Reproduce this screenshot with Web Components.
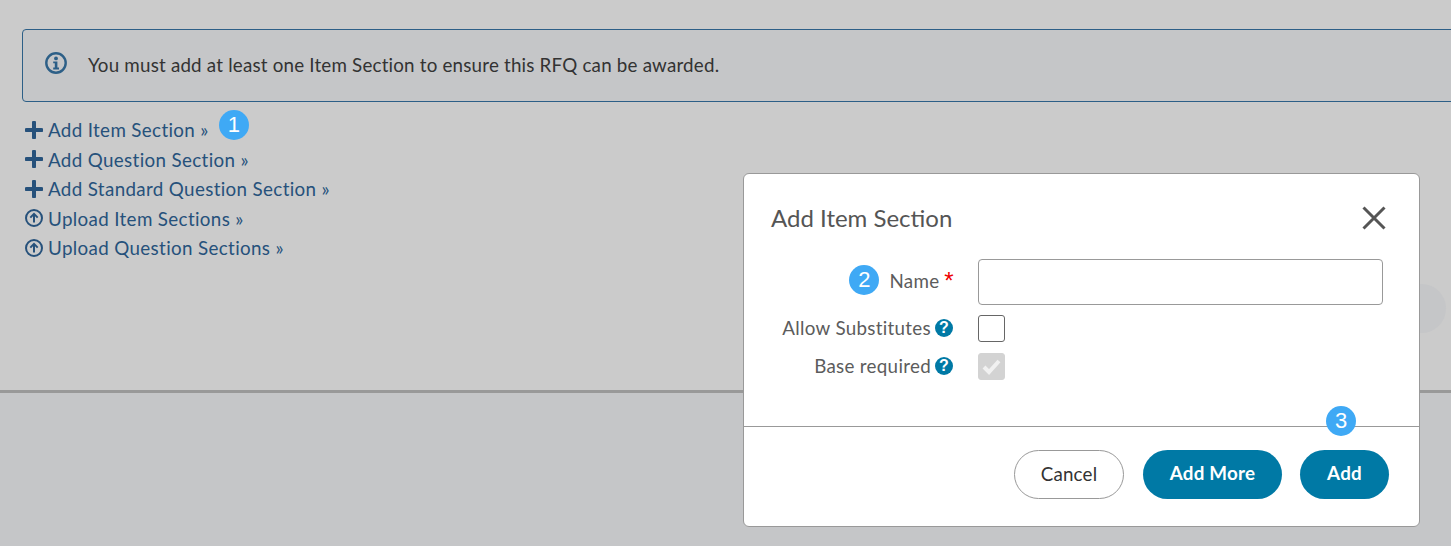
<!DOCTYPE html>
<html>
<head>
<meta charset="utf-8">
<title>Add Item Section</title>
<style>
  html, body { margin: 0; padding: 0; }
  body { width: 1451px; height: 546px; overflow: hidden; position: relative; background: #c5c6c8; font-family: "Lato", "Liberation Sans", sans-serif; }
</style>
</head>
<body>
<rfq-page></rfq-page>
<script>
const PLUS = `<svg width="18" height="18" viewBox="0 0 18 18"><path d="M9 1.5v15M1.5 9h15" stroke="#26517b" stroke-width="4" stroke-linecap="round" fill="none"/></svg>`;
const UPLOAD = `<svg width="18" height="18" viewBox="0 0 18 18" fill="none" stroke="#26517b" stroke-width="2"><circle cx="9" cy="9" r="8"/><path d="M9 13.5V5M5.3 8.6 9 4.9l3.7 3.7"/></svg>`;

class NumBadge extends HTMLElement {
  constructor() {
    super();
    this.attachShadow({ mode: "open" });
    this.shadowRoot.innerHTML = `
      <style>
        :host { display: inline-flex; width: 30px; height: 30px; border-radius: 50%; background: #3fa9f5; color: #fff; align-items: center; justify-content: center; font: 22px/1 "Liberation Sans", sans-serif; letter-spacing: 0; }
      </style>
      <slot></slot>`;
  }
}

class InfoAlert extends HTMLElement {
  constructor() {
    super();
    this.attachShadow({ mode: "open" });
    this.shadowRoot.innerHTML = `
      <style>
        :host { display: flex; align-items: center; box-sizing: border-box; height: 73px; width: 1460px; margin-left: 22px; padding: 0 0 2px 22px; gap: 21px; background: #c5c6c8; border: 1px solid #2d5f87; border-radius: 4px; color: #333; font-size: 18.8px; letter-spacing: 0.19px; }
        svg { display: block; margin-top: -4px; }
      </style>
      <svg width="22" height="22" viewBox="0 0 22 22" fill="none"><circle cx="11" cy="11" r="9.7" stroke="#2d5f87" stroke-width="2.4"/><circle cx="11" cy="6.4" r="1.9" fill="#2d5f87"/><path d="M8.2 9.4h4.2v6.2h1.6v1.9H8.2v-1.9h1.6v-4.3H8.2z" fill="#2d5f87"/></svg>
      <span><slot></slot></span>`;
  }
}

class ActionLink extends HTMLElement {
  constructor() {
    super();
    this.attachShadow({ mode: "open" });
    const icon = this.getAttribute("icon") === "upload" ? UPLOAD : PLUS;
    this.shadowRoot.innerHTML = `
      <style>
        :host { display: flex; align-items: center; height: 29.5px; gap: 5px; color: #26517b; font-size: 18.8px; letter-spacing: 0.35px; }
        .i { display: flex; width: 18px; }
        ::slotted(num-badge) { margin: -9px 0 0 5px; }
      </style>
      <span class="i">${icon}</span><span><slot name="text"></slot></span><slot></slot>`;
  }
}

class HelpIcon extends HTMLElement {
  constructor() {
    super();
    this.attachShadow({ mode: "open" });
    this.shadowRoot.innerHTML = `
      <style>
        :host { display: inline-flex; width: 18px; height: 18px; border-radius: 50%; background: #0079a5; color: #fff; align-items: center; justify-content: center; font: bold 16px/1 "Liberation Sans", sans-serif; letter-spacing: 0; }
      </style>?`;
  }
}

class FormRow extends HTMLElement {
  constructor() {
    super();
    this.attachShadow({ mode: "open" });
    const shift = this.getAttribute("label-shift") || "-2";
    this.shadowRoot.innerHTML = `
      <style>
        :host { display: grid; grid-template-columns: 182px 1fr; column-gap: 25px; align-items: center; color: #5c5c5c; font-size: 18.8px; letter-spacing: 0.3px; }
        .label { display: flex; justify-content: flex-end; align-items: center; gap: 4px; margin-top: ${shift}px; }
      </style>
      <div class="label"><slot name="label"></slot></div>
      <div><slot></slot></div>`;
  }
}

class CheckBox extends HTMLElement {
  constructor() {
    super();
    this.attachShadow({ mode: "open" });
    const off = this.hasAttribute("disabled");
    this.shadowRoot.innerHTML = `
      <style>
        :host { display: block; box-sizing: border-box; width: 27px; height: 27px; border-radius: 3px; border: 1px solid ${off ? "#d3d3d3" : "#666"}; background: ${off ? "#d3d3d3" : "#fff"}; }
        svg { display: block; }
      </style>
      ${off ? `<svg width="25" height="25" viewBox="0 0 25 25"><path d="M5 13l5 5 10-11" fill="none" stroke="#f1f1f1" stroke-width="4"/></svg>` : ""}`;
  }
}

class PillButton extends HTMLElement {
  constructor() {
    super();
    this.attachShadow({ mode: "open" });
    const primary = this.hasAttribute("primary");
    this.shadowRoot.innerHTML = `
      <style>
        :host { display: inline-flex; box-sizing: border-box; height: 49px; padding-bottom: ${primary ? 4 : 3}px; border-radius: 25px; align-items: center; justify-content: center; font-size: 18.8px; letter-spacing: 0.2px; ${primary ? "background:#0079a5;color:#fff;font-weight:700;" : "background:#fff;color:#333;border:1px solid #999;"} }
      </style>
      <slot></slot>`;
  }
}

class ModalDialog extends HTMLElement {
  constructor() {
    super();
    this.attachShadow({ mode: "open" });
    this.shadowRoot.innerHTML = `
      <style>
        :host { position: absolute; left: 743px; top: 173px; width: 677px; height: 354px; box-sizing: border-box; background: #fff; border: 1px solid #999; border-radius: 6px; display: flex; flex-direction: column; font-size: 18px; }
        header { display: flex; justify-content: space-between; align-items: center; height: 85px; padding: 1px 33px 0 27px; box-sizing: border-box; color: #555; font-size: 24px; }
        header svg { margin-top: 2px; }
        svg { display: block; }
        .body { flex: 1; display: flex; flex-direction: column; padding: 0 36px 0 27px; }
        footer { position: relative; height: 100px; box-sizing: border-box; border-top: 1px solid #999; display: flex; justify-content: flex-end; gap: 19px; padding: 23px 30px 0 0; }
        footer ::slotted(pill-button:last-child) { margin-left: -1px; }
        ::slotted([slot="pin"]) { position: absolute; right: 63px; top: -21px; }
      </style>
      <header>
        <span><slot name="title"></slot></span>
        <svg width="24" height="24" viewBox="0 0 24 24"><path d="M1.5 1.5l21 21M22.5 1.5l-21 21" stroke="#555" stroke-width="3" fill="none"/></svg>
      </header>
      <div class="body"><slot></slot></div>
      <footer><slot name="pin"></slot><slot name="actions"></slot></footer>`;
  }
}

class RfqPage extends HTMLElement {
  constructor() {
    super();
    this.attachShadow({ mode: "open" });
    this.shadowRoot.innerHTML = `
      <style>
        :host { display: block; height: 546px; position: relative; overflow: hidden; }
        .top { box-sizing: border-box; height: 393px; background: #cbcbcb; border-bottom: 3px solid #999; padding-top: 29px; }
        .links { padding: 13px 0 0 25px; }
        .blob { position: absolute; left: 1397px; top: 284px; width: 49px; height: 49px; border-radius: 50%; background: #c5c6c8; }
        .name { display: block; box-sizing: border-box; width: 405px; height: 46px; border: 1px solid #999; border-radius: 4px; background: #fff; }
        .req { color: #e00; font: 24px/1 "Liberation Sans", sans-serif; height: 18px; margin: -4px -1px 0 1px; }
        num-badge.two { margin-right: 6px; }
        form-row.a { margin-top: 10px; }
        form-row.b { margin-top: 11px; }
        .cancel { width: 110px; }
        .more { width: 139px; }
        .add { width: 89px; }
      </style>
      <div class="top">
        <info-alert>You must add at least one Item Section to ensure this RFQ can be awarded.</info-alert>
        <div class="links">
          <action-link><span slot="text">Add Item Section »</span><num-badge>1</num-badge></action-link>
          <action-link><span slot="text">Add Question Section »</span></action-link>
          <action-link><span slot="text">Add Standard Question Section »</span></action-link>
          <action-link icon="upload"><span slot="text">Upload Item Sections »</span></action-link>
          <action-link icon="upload"><span slot="text">Upload Question Sections »</span></action-link>
        </div>
      </div>
      <div class="blob"></div>
      <modal-dialog>
        <span slot="title">Add Item Section</span>
        <form-row label-shift="-4">
          <span slot="label" style="display:contents"><num-badge class="two">2</num-badge><span>Name</span><span class="req">*</span></span>
          <div class="name"></div>
        </form-row>
        <form-row class="a">
          <span slot="label" style="display:contents"><span>Allow Substitutes</span><help-icon></help-icon></span>
          <check-box></check-box>
        </form-row>
        <form-row class="b">
          <span slot="label" style="display:contents"><span>Base required</span><help-icon></help-icon></span>
          <check-box disabled></check-box>
        </form-row>
        <num-badge slot="pin">3</num-badge>
        <pill-button slot="actions" class="cancel">Cancel</pill-button>
        <pill-button slot="actions" class="more" primary>Add More</pill-button>
        <pill-button slot="actions" class="add" primary>Add</pill-button>
      </modal-dialog>`;
  }
}

customElements.define("num-badge", NumBadge);
customElements.define("info-alert", InfoAlert);
customElements.define("action-link", ActionLink);
customElements.define("help-icon", HelpIcon);
customElements.define("form-row", FormRow);
customElements.define("check-box", CheckBox);
customElements.define("pill-button", PillButton);
customElements.define("modal-dialog", ModalDialog);
customElements.define("rfq-page", RfqPage);
</script>
</body>
</html>
